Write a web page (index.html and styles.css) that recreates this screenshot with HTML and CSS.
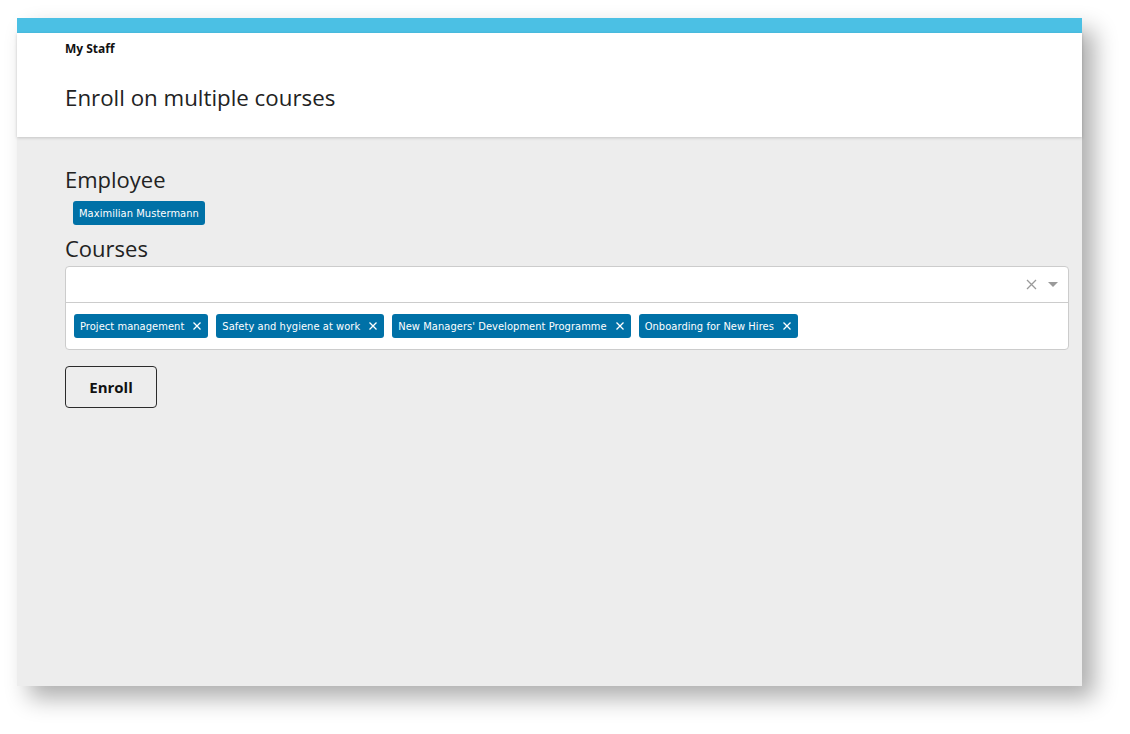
FILE: index.html
```html
<!DOCTYPE html>
<html>
<head>
<meta charset="utf-8">
<link rel="stylesheet" href="styles.css">
</head>
<body>
<div class="window">
  <div class="topbar"></div>
  <header class="header">
    <div class="breadcrumb">My Staff</div>
    <h1 class="title">Enroll on multiple courses</h1>
  </header>
  <main class="content">
    <h2 class="section-title">Employee</h2>
    <div class="employee-row">
      <span class="tag">Maximilian Mustermann</span>
    </div>
    <h2 class="section-title courses-title">Courses</h2>
    <div class="select">
      <div class="select-input">
        <svg class="clear-icon" width="11" height="11" viewBox="0 0 11 11"><path d="M1 1L10 10M10 1L1 10" stroke="#9a9a9a" stroke-width="1.3" fill="none"/></svg>
        <svg class="arrow-icon" width="10" height="5" viewBox="0 0 10 5"><path d="M0 0H10L5 5Z" fill="#9a9a9a"/></svg>
      </div>
      <div class="select-tags">
        <span class="tag">Project management<svg class="tag-x" width="8" height="8" viewBox="0 0 8 8"><path d="M0.5 0.5L7.5 7.5M7.5 0.5L0.5 7.5" stroke="#fff" stroke-width="1.3" fill="none"/></svg></span>
        <span class="tag">Safety and hygiene at work<svg class="tag-x" width="8" height="8" viewBox="0 0 8 8"><path d="M0.5 0.5L7.5 7.5M7.5 0.5L0.5 7.5" stroke="#fff" stroke-width="1.3" fill="none"/></svg></span>
        <span class="tag">New Managers' Development Programme<svg class="tag-x" width="8" height="8" viewBox="0 0 8 8"><path d="M0.5 0.5L7.5 7.5M7.5 0.5L0.5 7.5" stroke="#fff" stroke-width="1.3" fill="none"/></svg></span>
        <span class="tag">Onboarding for New Hires<svg class="tag-x" width="8" height="8" viewBox="0 0 8 8"><path d="M0.5 0.5L7.5 7.5M7.5 0.5L0.5 7.5" stroke="#fff" stroke-width="1.3" fill="none"/></svg></span>
      </div>
    </div>
    <button class="btn">Enroll</button>
  </main>
</div>
</body>
</html>
```

FILE: styles.css
```css
html, body {
  margin: 0;
  padding: 0;
  background: #ffffff;
}
body {
  font-family: "Open Sans", "Noto Sans", sans-serif;
  color: #1e1e1e;
  min-height: 734px;
  padding-top: 18px;
  padding-left: 17px;
  box-sizing: border-box;
}
.window {
  width: 1065px;
  height: 668px;
  display: flex;
  flex-direction: column;
  box-shadow: 12px 12px 22px rgba(0, 0, 0, 0.32);
  background: #ededed;
}
.topbar {
  height: 15px;
  background: #4bc0e4;
  flex: none;
}
.header {
  flex: none;
  height: 104px;
  box-sizing: border-box;
  background: #ffffff;
  padding: 8px 48px 0;
  box-shadow: 0 1px 3px rgba(0, 0, 0, 0.18);
  position: relative;
  z-index: 1;
}
.breadcrumb {
  font-weight: 700;
  font-size: 12px;
  line-height: 16px;
  color: #111;
}
.title {
  margin: 26px 0 0;
  font-weight: 400;
  font-size: 22.3px;
  line-height: 30px;
  color: #222;
}
.content {
  flex: 1;
  padding: 27px 13px 0 48px;
  display: flex;
  flex-direction: column;
  align-items: flex-start;
}
.section-title {
  margin: 0;
  font-weight: 400;
  font-size: 22px;
  line-height: 30px;
  color: #222;
}
.employee-row {
  margin: 7px 0 0 8px;
  display: flex;
}
.courses-title {
  margin-top: 8px;
}
.tag {
  display: inline-flex;
  align-items: center;
  height: 24px;
  box-sizing: border-box;
  padding: 0 6px;
  background: #0071a7;
  color: #ffffff;
  border-radius: 3px;
  font-family: "DejaVu Sans Condensed", "DejaVu Sans", sans-serif;
  font-size: 11px;
  letter-spacing: 0.06px;
  white-space: nowrap;
}
.tag-x {
  margin-left: 9px;
  margin-right: 1px;
}
.select {
  margin-top: 3px;
  align-self: stretch;
  background: #ffffff;
  border: 1px solid #cccccc;
  border-radius: 4px;
}
.select-input {
  height: 35px;
  border-bottom: 1px solid #cccccc;
  display: flex;
  align-items: center;
  justify-content: flex-end;
  padding-right: 10px;
  gap: 11px;
}
.select-tags {
  display: flex;
  gap: 8px;
  padding: 11px 8px 11px;
}
.btn {
  margin-top: 16px;
  width: 92px;
  height: 42px;
  border: 1px solid #2b2b2b;
  border-radius: 4px;
  background: transparent;
  font-family: "Open Sans", "Noto Sans", sans-serif;
  font-weight: 700;
  font-size: 15px;
  color: #111;
  padding: 0;
}
```
